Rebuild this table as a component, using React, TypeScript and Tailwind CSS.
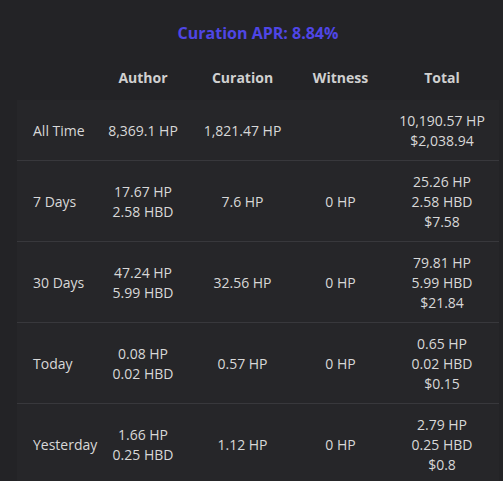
import React from "react";

type Row = { label: string; author: string[]; curation: string[]; witness: string[]; total: string[] };

const rows: Row[] = [
  { label: "All Time", author: ["8,369.1 HP"], curation: ["1,821.47 HP"], witness: [], total: ["10,190.57 HP", "$2,038.94"] },
  { label: "7 Days", author: ["17.67 HP", "2.58 HBD"], curation: ["7.6 HP"], witness: ["0 HP"], total: ["25.26 HP", "2.58 HBD", "$7.58"] },
  { label: "30 Days", author: ["47.24 HP", "5.99 HBD"], curation: ["32.56 HP"], witness: ["0 HP"], total: ["79.81 HP", "5.99 HBD", "$21.84"] },
  { label: "Today", author: ["0.08 HP", "0.02 HBD"], curation: ["0.57 HP"], witness: ["0 HP"], total: ["0.65 HP", "0.02 HBD", "$0.15"] },
  { label: "Yesterday", author: ["1.66 HP", "0.25 HBD"], curation: ["1.12 HP"], witness: ["0 HP"], total: ["2.79 HP", "0.25 HBD", "$0.8"] },
];

function Cell({ lines, extra = "" }: { lines: string[]; extra?: string }) {
  return (
    <div className={"flex flex-col items-center justify-center text-center " + extra}>
      {lines.map((l, i) => (
        <div key={i}>{l}</div>
      ))}
    </div>
  );
}

export default function App() {
  return (
    <div
      className="w-[503px] h-[481px] overflow-hidden bg-[#232326] text-[#d8d8d8] text-[14px] leading-[20px]"
      style={{ fontFamily: '"Open Sans", "Noto Sans", sans-serif' }}
    >
      <div className="ml-[17px] w-[482px] pt-[21px]">
        <div className="text-center text-[16px] leading-[24px] font-bold text-[#4f46e5]">Curation APR: 8.84%</div>
        <div className="mt-[23px] pb-[12px] grid grid-cols-[76px_100px_99px_97px_110px] font-bold text-[#d0d0d0]">
          <div></div>
          <div className="text-center">Author</div>
          <div className="text-center">Curation</div>
          <div className="text-center">Witness</div>
          <div className="text-center pr-1">Total</div>
        </div>
        <div className="bg-[#262629]">
          {rows.map((r, i) => (
            <div
              key={r.label}
              className={
                "grid grid-cols-[76px_100px_99px_97px_110px] pt-[11px] pb-[9px] " +
                (i > 0 ? "border-t border-[#38383c]" : "")
              }
            >
              <div className="flex items-center pl-4 whitespace-nowrap">{r.label}</div>
              <Cell lines={r.author} />
              <Cell lines={r.curation} />
              <Cell lines={r.witness} />
              <Cell lines={r.total} extra="pr-1" />
            </div>
          ))}
        </div>
      </div>
    </div>
  );
}
